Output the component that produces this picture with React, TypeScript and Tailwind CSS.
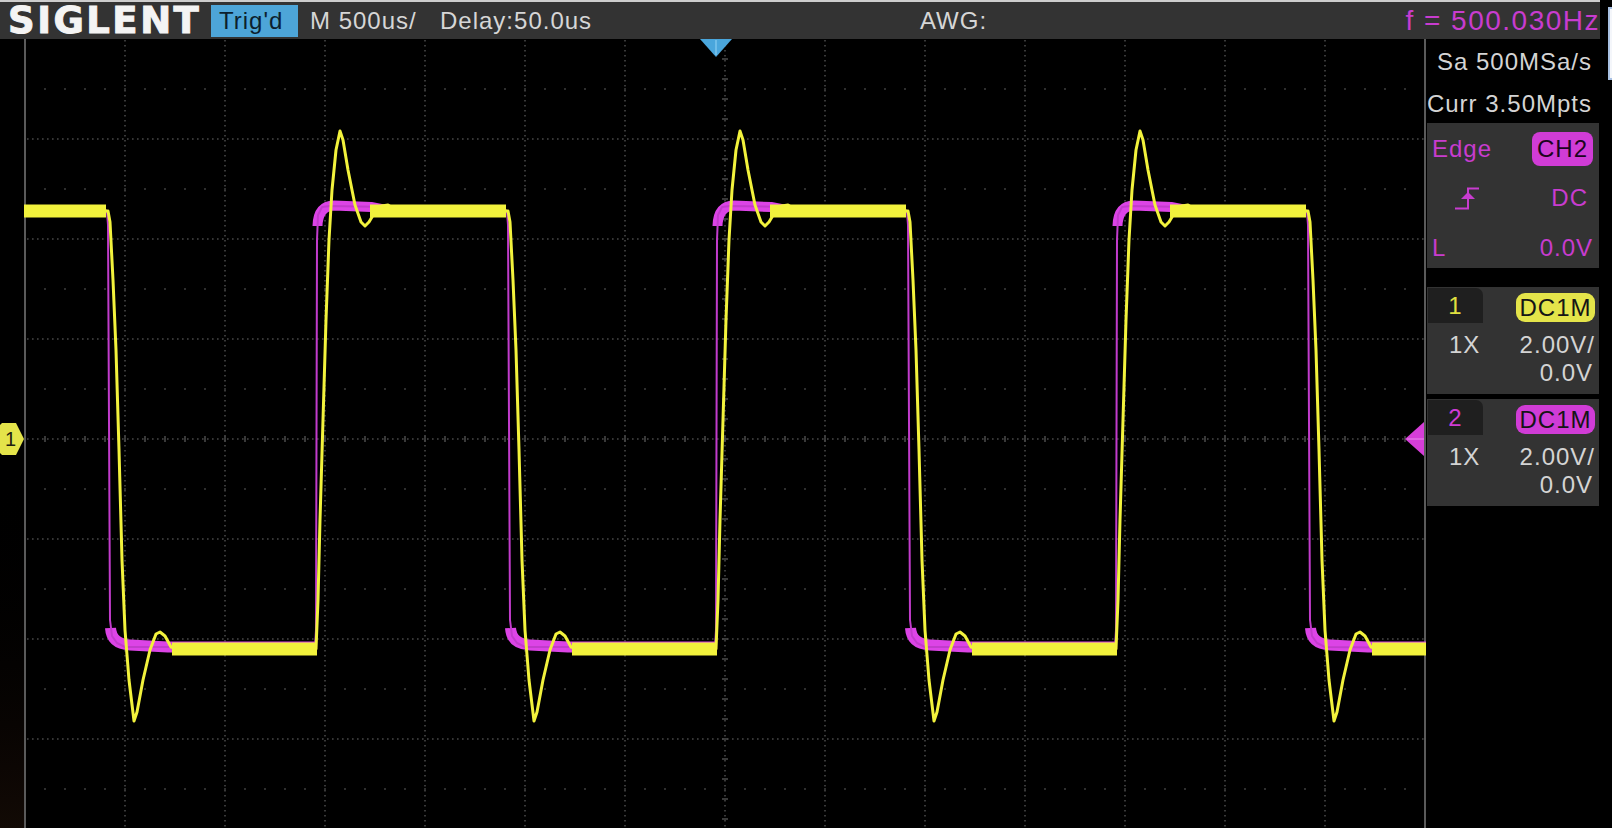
import React from 'react';

type Pt = [number, number];

const YEL = '#f2f23c';
const MAG = '#dc44e6';
const MAG_LINE = '#c23ccc';

const yFall: Pt[] = [[0,211],[2,222],[5,280],[8,350],[11,450],[14,560],[17,630],[21,680],[26,721],[29,712],[35,680],[42,650],[48,634],[52,632],[57,636],[63,647],[70,649]];
const yRise: Pt[] = [[0,649],[2,600],[4,520],[7,420],[10,320],[13,240],[16,190],[20,150],[24,131],[27,140],[32,170],[39,205],[45,222],[49,226],[53,222],[59,212],[66,206],[72,205],[78,209],[84,211]];

const mFall: Pt[] = [[-4,209],[-1,211],[0,225],[2,620],[4,636],[9,643],[17,647]];
const mRise: Pt[] = [[-1,647],[0,630],[1,240],[2,215],[6,207],[14,206]];

function toPath(pts: Pt[]) {
  return pts.map((p, i) => (i === 0 ? 'M' : 'L') + p[0] + ' ' + p[1]).join(' ');
}

function buildYellow() {
  const pts: Pt[] = [[24, 211]];
  for (let k = 0; k < 4; k++) {
    const f = 108 + 400 * k;
    yFall.forEach(([dx, y]) => pts.push([f + dx, y]));
    if (k < 3) {
      const r = 316 + 400 * k;
      yRise.forEach(([dx, y]) => pts.push([r + dx, y]));
    }
  }
  pts.push([1426, 649]);
  return toPath(pts);
}

function buildMagenta() {
  const pts: Pt[] = [[24, 209]];
  for (let k = 0; k < 4; k++) {
    const f = 108 + 400 * k;
    mFall.forEach(([dx, y]) => pts.push([f + dx, y]));
    if (k < 3) {
      const r = 316 + 400 * k;
      mRise.forEach(([dx, y]) => pts.push([r + dx, y]));
    }
  }
  pts.push([1426, 648]);
  return toPath(pts);
}

function range(a: number, b: number, s: number) {
  const out: number[] = [];
  for (let v = a; v <= b; v += s) out.push(v);
  return out;
}

function Plot() {
  const yPath = buildYellow();
  const mPath = buildMagenta();
  return (
    <div className="w-[1402px] h-[789px]">
      <svg width="1402" height="789" viewBox="24 39 1402 789" className="block">
        {range(125, 1325, 100).map((x) => (
          <line key={'v' + x} x1={x} y1={40} x2={x} y2={828} stroke="#484848" strokeWidth={1.6} strokeDasharray="1.6 3.4" />
        ))}
        {range(139, 739, 100).map((y) => (
          <line key={'h' + y} x1={27} y1={y} x2={1424} y2={y} stroke="#484848" strokeWidth={1.6} strokeDasharray="1.6 3.4" />
        ))}
        {range(89, 789, 100).map((y) =>
          range(45, 1405, 20).map((x) => (
            <rect key={'d' + x + '-' + y} x={x - 0.8} y={y - 0.8} width={1.6} height={1.6} fill="#484848" />
          ))
        )}
        {range(45, 1405, 20).map((x) => (
          <line key={'tx' + x} x1={x} y1={436} x2={x} y2={442} stroke="#484848" strokeWidth={1.6} />
        ))}
        {range(59, 819, 20).map((y) => (
          <line key={'ty' + y} x1={722} y1={y} x2={728} y2={y} stroke="#484848" strokeWidth={1.6} />
        ))}
        <line x1={25} y1={39} x2={25} y2={828} stroke="#5a5a5a" strokeWidth={2} />
        <line x1={1425} y1={39} x2={1425} y2={828} stroke="#5a5a5a" strokeWidth={2} />

        <g fill="none" stroke={MAG} strokeLinejoin="round">
          <path d="M24 210 H104" strokeWidth={10} />
          {[0, 1, 2, 3].map((k) => {
            const f = 108 + 400 * k;
            return (
              <path key={'ml' + k} d={`M${f + 2.5} 628 Q${f + 3.5} 644 ${f + 22} 645 L${f + 60} 647 H${Math.min(316 + 400 * k, 1426)}`} strokeWidth={11} />
            );
          })}
          {[0, 1, 2].map((k) => {
            const r = 316 + 400 * k;
            return (
              <path key={'mh' + k} d={`M${r + 1.5} 226 Q${r + 2} 206 ${r + 18} 205.5 L${r + 55} 207 L${r + 70} 210 H${r + 188}`} strokeWidth={10} />
            );
          })}
          <path d={mPath} strokeWidth={2} stroke={MAG_LINE} />
        </g>

        <g fill="none" stroke={YEL} strokeLinejoin="round">
          <path d="M24 211 H106" strokeWidth={13} />
          {[0, 1, 2].map((k) => (
            <path key={'yh' + k} d={`M${370 + 400 * k} 211 H${106 + 400 * (k + 1)}`} strokeWidth={13} />
          ))}
          {[0, 1, 2, 3].map((k) => (
            <path key={'yl' + k} d={`M${172 + 400 * k} 649 H${Math.min(317 + 400 * k, 1426)}`} strokeWidth={13} />
          ))}
          <path d={yPath} strokeWidth={3} />
        </g>

        <polygon points="700,39 732,39 716,57" fill="#4aa6dc" />
        <line x1={716} y1={40} x2={716} y2={55} stroke="#7cc4ee" strokeWidth={1.5} />
        <polygon points="1405,439 1424,422 1424,456" fill="#d63ed8" />
        <line x1={1407} y1={439} x2={1424} y2={439} stroke="#e98cec" strokeWidth={1} />
      </svg>
    </div>
  );
}

function Gutter() {
  return (
    <div className="w-[24px] pt-[384px] bg-linear-to-b from-black from-50% to-[#120a05]">
      <div className="relative w-[24px] h-[32px] flex items-center">
        <svg width="24" height="32" viewBox="0 0 24 32" className="absolute inset-0">
          <polygon points="2,0 16,0 24,16 16,32 2,32 0,30 0,2" fill="#e4e44a" />
        </svg>
        <span className="relative pl-[5px] text-[20px] leading-none text-[#202010]">1</span>
      </div>
    </div>
  );
}

function EdgeIcon() {
  return (
    <svg width="24" height="24" viewBox="0 0 24 24">
      <path d="M0 22.5H13V2.5H24" stroke="#c83ccf" strokeWidth="2" fill="none" />
      <path d="M13 6L20 13H6Z" fill="#c83ccf" />
    </svg>
  );
}

function ChannelBox({ num, mt, tabText, badge }: { num: string; mt: string; tabText: string; badge: string }) {
  return (
    <div className={mt + ' ml-[1px] w-[172px] h-[107px] bg-[#333333] flex flex-col'}>
      <div className="h-[36px] flex items-start justify-between">
        <div className={'ml-[1px] mt-[1px] w-[55px] h-[35px] bg-[#1f1f1f] rounded-tr-[7px] flex items-center justify-center ' + tabText}>{num}</div>
        <div className={'mt-[6px] mr-[4px] w-[79px] h-[29px] rounded-[9px] text-[#151515] flex items-center justify-center ' + badge}>DC1M</div>
      </div>
      <div className="mt-[8px] h-[28px] flex justify-between pl-[22px] pr-[4px]">
        <span>1X</span>
        <span>2.00V/</span>
      </div>
      <div className="h-[28px] flex justify-end pr-[6px]">0.0V</div>
    </div>
  );
}

function Panel() {
  return (
    <div className="w-[174px] flex flex-col text-[24px] tracking-[1px] text-[#d4d4d4] leading-[28px]">
      <div className="h-[46px] flex items-center justify-end pr-[8px]">Sa 500MSa/s</div>
      <div className="h-[38px] flex items-center justify-end pr-[8px]">Curr 3.50Mpts</div>
      <div className="ml-[1px] w-[172px] h-[145px] bg-[#333333] flex flex-col text-[#c83ccf]">
        <div className="h-[52px] flex items-center justify-between pl-[5px] pr-[6px]">
          <span>Edge</span>
          <span className="w-[61px] h-[34px] rounded-[8px] bg-[#d03cd6] text-[#1c0420] flex items-center justify-center">CH2</span>
        </div>
        <div className="h-[46px] flex items-center justify-between pl-[28px] pr-[11px]">
          <EdgeIcon />
          <span>DC</span>
        </div>
        <div className="h-[47px] pt-[6px] flex items-center justify-between pl-[5px] pr-[6px]">
          <span>L</span>
          <span>0.0V</span>
        </div>
      </div>
      <ChannelBox num="1" mt="mt-[19px]" tabText="text-[#e0e040]" badge="bg-[#e4e44a]" />
      <ChannelBox num="2" mt="mt-[5px]" tabText="text-[#d03cd6]" badge="bg-[#d03cd6]" />
    </div>
  );
}

function Header() {
  return (
    <div className="h-[37px] bg-[#333333] flex items-center text-[24px] tracking-[1px] text-[#d6d6d6]">
      <div className="ml-[8px] w-[203px] h-[37px] flex items-center font-['DejaVu_Sans',sans-serif] font-bold text-[37px] leading-[37px] tracking-[2.5px] text-[#f4f4f4] [-webkit-text-stroke:1px_#f4f4f4]">SIGLENT</div>
      <div className="w-[87px] h-[32px] bg-[#4da5d8] text-[#0c1f2e] flex items-center pl-[8px]">Trig'd</div>
      <div className="ml-[12px] w-[130px]">M 500us/</div>
      <div className="w-[480px]">Delay:50.0us</div>
      <div className="flex-1">AWG:</div>
      <div className="text-[28px] tracking-[1.5px] text-[#c83ccf]">f = 500.030Hz</div>
    </div>
  );
}

export default function App() {
  return (
    <div className="w-[1612px] h-[828px] bg-black flex overflow-hidden font-['Liberation_Sans',Arial,sans-serif]">
      <div className="w-[1600px] flex flex-col">
        <div className="h-[2px] bg-[#cdcdcd]" />
        <Header />
        <div className="flex flex-1 min-h-0">
          <Gutter />
          <Plot />
          <Panel />
        </div>
      </div>
      <div className="w-[12px] pt-[7px] pl-[8px]">
        <div className="w-[4px] h-[73px] bg-[#f4f6fa] border-l-2 border-y-2 border-[#a9c1e3]" />
      </div>
    </div>
  );
}
